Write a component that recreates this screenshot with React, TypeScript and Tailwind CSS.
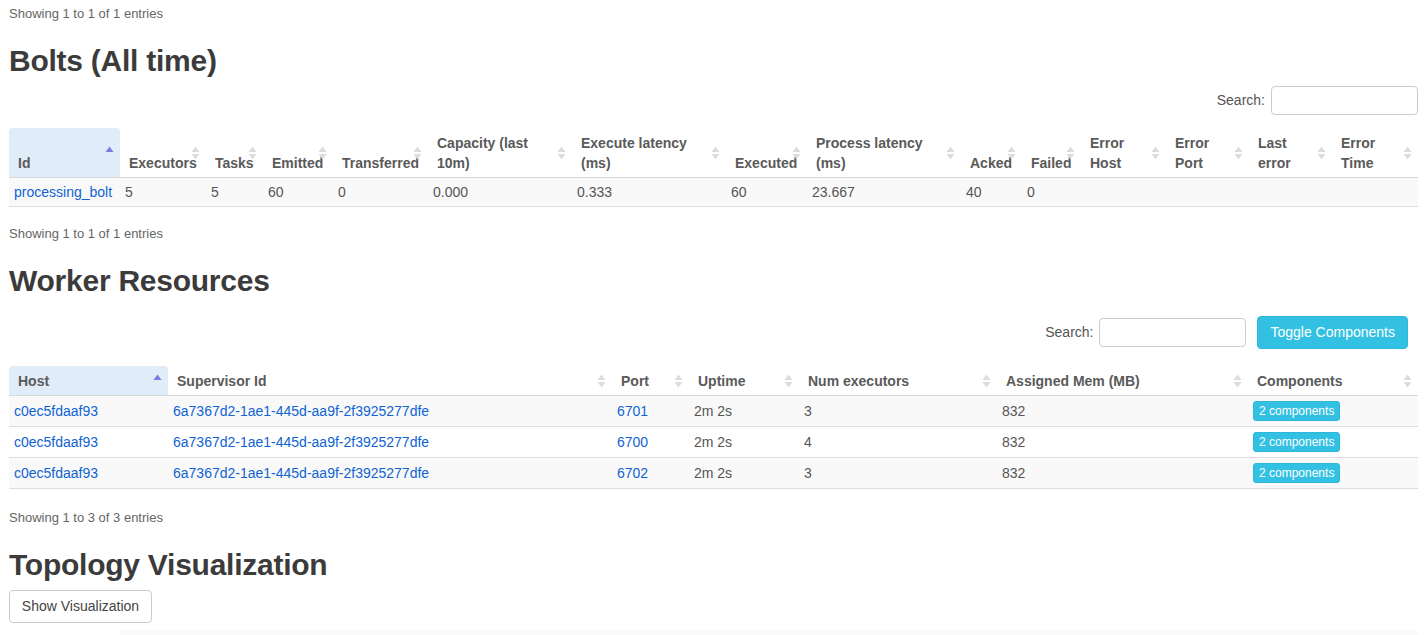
import React from "react";

const link = "text-[#0f63d3]";

function SortIcon({ active }: { active?: boolean }) {
  return (
    <svg
      width="9"
      height="15"
      viewBox="0 0 9 15"
      className="absolute right-[6px] top-1/2 -translate-y-1/2"
    >
      <polygon points="4.5,1 8.5,6.5 0.5,6.5" fill={active ? "#7b7be3" : "#dcdcdc"} />
      {!active && <polygon points="0.5,8.5 8.5,8.5 4.5,14" fill="#dcdcdc" />}
    </svg>
  );
}

type Col = { label: React.ReactNode; w: string };

function Th({ col, sorted }: { col: Col; sorted?: boolean }) {
  return (
    <th
      className={`relative pl-[9px] pr-[22px] pt-[5px] pb-[4px] text-left align-bottom font-bold leading-5 text-[#5a5a5a] border-b border-[#d8d8d8] ${
        sorted ? "bg-[#e0ecf7] rounded-t-[4px]" : ""
      }`}
    >
      {col.label}
      <SortIcon active={sorted} />
    </th>
  );
}

function Showing({ text }: { text: string }) {
  return <p className="text-[13px] leading-5 text-[#666]">{text}</p>;
}

function Heading({ children }: { children: React.ReactNode }) {
  return (
    <h2 className="mt-[20px] h-[33px] text-[30px] font-bold leading-[33px] tracking-[-0.25px] text-[#3b3b3b]">
      {children}
    </h2>
  );
}

function Search() {
  return (
    <label className="flex items-center gap-[6px] text-[14px] text-[#555]">
      Search:
      <input className="h-[29px] w-[147px] rounded-[4px] border border-[#cccccc] bg-white px-2 outline-none" />
    </label>
  );
}

const boltCols: Col[] = [
  { label: "Id", w: "w-[111px]" },
  { label: "Executors", w: "w-[86px]" },
  { label: "Tasks", w: "w-[57px]" },
  { label: "Emitted", w: "w-[70px]" },
  { label: "Transferred", w: "w-[95px]" },
  { label: "Capacity (last 10m)", w: "w-[144px]" },
  { label: "Execute latency (ms)", w: "w-[154px]" },
  { label: "Executed", w: "w-[81px]" },
  { label: "Process latency (ms)", w: "w-[154px]" },
  { label: "Acked", w: "w-[61px]" },
  { label: "Failed", w: "w-[59px]" },
  { label: "Error Host", w: "w-[85px]" },
  { label: "Error Port", w: "w-[83px]" },
  { label: "Last error", w: "w-[83px]" },
  { label: "Error Time", w: "w-[86px]" },
];

const boltRow = ["5", "5", "60", "0", "0.000", "0.333", "60", "23.667", "40", "0", "", "", "", ""];

const workerCols: Col[] = [
  { label: "Host", w: "w-[159px]" },
  { label: "Supervisor Id", w: "w-[444px]" },
  { label: "Port", w: "w-[77px]" },
  { label: "Uptime", w: "w-[110px]" },
  { label: "Num executors", w: "w-[198px]" },
  { label: "Assigned Mem (MB)", w: "w-[251px]" },
  { label: "Components", w: "w-[170px]" },
];

const workers = [
  { port: "6701", execs: "3" },
  { port: "6700", execs: "4" },
  { port: "6702", execs: "3" },
];

const td = "px-[5px] leading-5 border-b border-[#dddddd] text-[#555] whitespace-nowrap";

export default function App() {
  return (
    <div className="min-h-screen bg-white px-[9px] pt-[4px] text-[14px] font-['Liberation_Sans',Arial,sans-serif]">
      <Showing text="Showing 1 to 1 of 1 entries" />
      <Heading>Bolts (All time)</Heading>
      <div className="mt-[9px] flex justify-end">
        <Search />
      </div>

      <table className="mt-[13px] w-[1409px] table-fixed border-collapse">
        <colgroup>
          {boltCols.map((c, i) => (
            <col key={i} className={c.w} />
          ))}
        </colgroup>
        <thead>
          <tr>
            {boltCols.map((c, i) => (
              <Th key={i} col={c} sorted={i === 0} />
            ))}
          </tr>
        </thead>
        <tbody>
          <tr className="bg-[#f9f9f9]">
            <td className={`${td} py-[4px]`}>
              <span className={link}>processing_bolt</span>
            </td>
            {boltRow.map((v, i) => (
              <td key={i} className={`${td} py-[4px]`}>
                {v}
              </td>
            ))}
          </tr>
        </tbody>
      </table>

      <div className="mt-[17px]">
        <Showing text="Showing 1 to 1 of 1 entries" />
      </div>
      <Heading>Worker Resources</Heading>
      <div className="mt-[19px] flex items-center justify-end gap-[11px] pr-[10px]">
        <Search />
        <button className="h-[33px] rounded-[4px] border border-[#2db8da] bg-[#33c1e3] px-[12px] text-[14px] text-white">
          Toggle Components
        </button>
      </div>

      <table className="mt-[17px] w-[1409px] table-fixed border-collapse">
        <colgroup>
          {workerCols.map((c, i) => (
            <col key={i} className={c.w} />
          ))}
        </colgroup>
        <thead>
          <tr>
            {workerCols.map((c, i) => (
              <Th key={i} col={c} sorted={i === 0} />
            ))}
          </tr>
        </thead>
        <tbody>
          {workers.map((w, i) => (
            <tr key={i} className={i % 2 === 0 ? "bg-[#f9f9f9]" : "bg-white"}>
              <td className={`${td} py-[5px]`}>
                <span className={link}>c0ec5fdaaf93</span>
              </td>
              <td className={`${td} py-[5px]`}>
                <span className={link}>6a7367d2-1ae1-445d-aa9f-2f3925277dfe</span>
              </td>
              <td className={`${td} py-[5px]`}>
                <span className={link}>{w.port}</span>
              </td>
              <td className={`${td} py-[5px]`}>2m 2s</td>
              <td className={`${td} py-[5px]`}>{w.execs}</td>
              <td className={`${td} py-[5px]`}>832</td>
              <td className={`${td} py-[5px]`}>
                <span className="inline-block align-top rounded-[3px] border border-[#2db8da] bg-[#33c1e3] px-[5px] text-[12px] leading-[18px] text-white">
                  2 components
                </span>
              </td>
            </tr>
          ))}
        </tbody>
      </table>

      <div className="mt-[19px]">
        <Showing text="Showing 1 to 3 of 3 entries" />
      </div>
      <Heading>Topology Visualization</Heading>
      <button className="mt-[9px] h-[33px] w-[143px] rounded-[4px] border border-[#cccccc] bg-white text-[14px] text-[#444]">
        Show Visualization
      </button>
      <div className="ml-[111px] mt-[7px] h-[12px] bg-[#fafafa]" />
    </div>
  );
}
